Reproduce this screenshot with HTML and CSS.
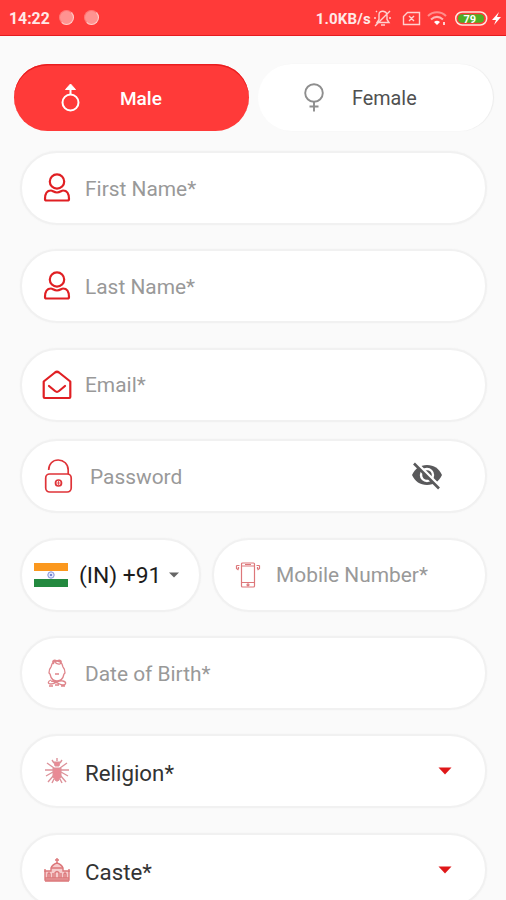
FILE: index.html
```html
<!DOCTYPE html>
<html lang="en">
<head>
<meta charset="utf-8">
<title>Register</title>
<link rel="stylesheet" href="styles.css">
</head>
<body>
<header class="status">
  <span class="clock">14:22</span>
  <i class="dot"></i><i class="dot"></i>
  <span class="speed">1.0KB/s</span>
  <svg class="status-icons" width="132" height="36" viewBox="0 0 132 36" fill="none" stroke="#ffd0cf" stroke-width="1.4">
    <path d="M3 22.500h12l-2-3v-4c0-5-8-6-8-1v5zM7 25h4M1 26 16 11M0 18h2M15 18h2M3 12l-1-1" />
    <path d="M33.500 12.500h12v12h-16v-8zM35 16l5 5m0-5-5 5" />
    <path d="M54 16c5-5 13-5 18 0" stroke="#ff8d8b" stroke-width="2"/>
    <path d="M57 19.500c4-3.500 8-3.500 12 0" stroke="#ffb5b3" stroke-width="2"/>
    <path d="M60 22c2-1.700 4-1.700 6 0l-3 3z" fill="#fff" stroke="none"/>
    <path d="M70 22v3" stroke-width="2"/>
    <rect x="81.700" y="12" width="31" height="13" rx="6.500" stroke="#ffe5dc" stroke-width="1.500"/>
    <rect x="84" y="14.300" width="26" height="8.500" rx="4" fill="#4fae25" stroke="none"/>
    <text class="battery" x="89.500" y="22.500">79</text>
    <path d="m125 12-7 8h4l-2 5 7-8h-4z" fill="#fff" stroke="none"/>
  </svg>
</header>
<main class="form">
  <div class="genders">
    <button class="gender gender-male">
      <svg class="gender-icon" width="22" height="32" viewBox="0 0 22 32" fill="none" stroke="#fff" stroke-width="2"><circle cx="11.500" cy="20.500" r="8"/><path d="M11.500 12.500V5"/><path d="m11.500 2 5 5.500h-10z" fill="#fff" stroke-width="1"/></svg>
      <span class="w-male">Male</span>
    </button>
    <button class="gender gender-female">
      <svg class="gender-icon" width="22" height="32" viewBox="0 0 22 32" fill="none" stroke="#8e8e8e" stroke-width="1.900"><circle cx="11" cy="11" r="8.800"/><path d="M11 20v9.500M6.500 24.500h9"/></svg>
      <span class="w-female">Female</span>
    </button>
  </div>

  <div class="field">
    <svg class="icon" width="30" height="32" viewBox="0 0 30 32" fill="none" stroke="#e01f23" stroke-width="2.200"><circle cx="15" cy="9.500" r="7.200"/><path d="M9 18.500c-4 0-6 3.500-6 8.500 0 1 .5 1.500 1.500 1.500h21c1 0 1.500-.5 1.500-1.500 0-5-2-8.500-6-8.500-1.500 0-3 2-6 2s-4.500-2-6-2z"/></svg>
    <span class="label">First Name*</span>
  </div>
  <div class="field">
    <svg class="icon" width="30" height="32" viewBox="0 0 30 32" fill="none" stroke="#e01f23" stroke-width="2.200"><circle cx="15" cy="9.500" r="7.200"/><path d="M9 18.500c-4 0-6 3.500-6 8.500 0 1 .5 1.500 1.500 1.500h21c1 0 1.500-.5 1.500-1.500 0-5-2-8.500-6-8.500-1.500 0-3 2-6 2s-4.500-2-6-2z"/></svg>
    <span class="label">Last Name*</span>
  </div>
  <div class="field">
    <svg class="icon" width="30" height="32" viewBox="0 0 30 32" fill="none" stroke="#e01f23" stroke-width="2.200" stroke-linejoin="round" stroke-linecap="round"><path d="M1.700 12.500 13 3.500q2-1.500 4 0l11.300 9V28q0 1-1 1H2.700q-1 0-1-1zM7 17l6 5q2 1.600 4 0l6-5"/></svg>
    <span class="label">Email*</span>
  </div>
  <div class="field field-password">
    <svg class="icon" width="30" height="36" viewBox="0 0 30 36" fill="none" stroke="#df3338" stroke-width="1.700"><rect x="1.700" y="16" width="25.500" height="18" rx="4"/><path d="M4.700 12c0-6 4-10 9.500-10s10 4 10 10v4"/><circle cx="14.500" cy="25" r="3"/><path d="M12.500 25h4M14.500 23v4" stroke-width=".8"/></svg>
    <span class="label">Password</span>
    <svg class="eye" width="32" height="30" viewBox="0 0 32 30"><path d="M1 14C4 7.500 9 4 16 4s12 3.500 15 10c-3 6.500-8 10-15 10S4 20.500 1 14z" fill="#59595b"/><circle cx="16" cy="14" r="6" fill="none" stroke="#fff" stroke-width="2.400"/><circle cx="16" cy="14" r="3.700" fill="#59595b"/><path d="M5 1.500 30 26.500" stroke="#fff" stroke-width="3"/><path d="M3 2.500 28 27.500" stroke="#59595b" stroke-width="2.600"/></svg>
  </div>
  <div class="phone-row">
    <div class="field country">
      <svg width="34" height="24" viewBox="0 0 34 24"><path fill="#fff" d="M0 0h34v24H0z"/><path fill="#fb981e" d="M0 0h34v8H0z"/><path fill="#23893f" d="M0 16h34v8H0z"/><circle cx="17" cy="12" r="3.200" fill="#dfe3fb" stroke="#8795d9"/><circle cx="17" cy="12" r="1" fill="#5266bb"/></svg>
      <span class="code">(IN) +91</span>
      <svg class="caret" width="10" height="6" viewBox="0 0 10 6"><path d="M0 .5h10L5 5.500z" fill="#666"/></svg>
    </div>
    <div class="field mobile">
      <svg width="26" height="28" viewBox="0 0 26 28" fill="none" stroke="#dd777a" stroke-width="1.200"><rect x="6.500" y="2" width="13" height="24" rx="1"/><path d="M6.500 5h13M6.500 21.500h13M10 3.500h6M1.500 4.500v3l2 1.500M4.500 4.500h-3M24.500 4.500v3l-2 1.500M21.500 4.500h3M3.500 6v2M22.500 6v2"/><circle cx="13" cy="23.800" r="1"/></svg>
      <span class="label">Mobile Number*</span>
    </div>
  </div>
  <div class="field">
    <svg class="icon" width="30" height="32" viewBox="0 0 30 32" fill="none" stroke="#df858b" stroke-width="1.300"><path d="M9 10c-2 2-2 4-2 6l1 1c1 5 4 7 7 7s6-2 7-7l1-1c0-2 0-4-2-6M9 10l1-3c2-4 8-4 10 0l1 3M12 7c-3-3 0-5 3-3 3-2 6 0 3 3M12 4q3 4 6 3M13 17h4M9 23c-3 1-4 4 0 4s8-4 12-3 3 4 0 4-8-4-12-4M7 29h4M13 28h4M19 29h4"/></svg>
    <span class="label">Date of Birth*</span>
  </div>
  <div class="field">
    <svg class="icon" width="30" height="32" viewBox="0 0 30 32" fill="none" stroke="#dd929a" stroke-width="1.400"><path d="M15 3v3M10 5l2 3M20 5l-2 3M5 8l7 5M25 8l-7 5M3 15h8M19 15h8M4 21l7-4M26 21l-7-4M6 27l6-7M24 27l-6-7M10 28l2-4M20 28l-2-4"/><path d="M12 7h6l-1 4h-4zM11 13h8v9l-3 4h-2l-3-4z" fill="#e98a95" stroke-width="1"/></svg>
    <span class="label dark">Religion*</span>
    <svg class="drop" width="14" height="8" viewBox="0 0 14 8"><path d="M.5.500h13L7 7.500z" fill="#df1719"/></svg>
  </div>
  <div class="field">
    <svg class="icon" width="30" height="32" viewBox="0 0 30 32" fill="none" stroke="#dc777a" stroke-width="1.400"><path d="M3 26V17h6v-3c1-3 3-4 6-5 3 1 5 2 6 5v3h6v9z" fill="#f6cccd"/><path d="M15 4v5M13 6h4M9 14h12M3 24h24M6 24v-4q1-2 2 0v4M11 24v-5M19 24v-5M13 24v-5q2-3 4 0v5M22 24v-4q1-2 2 0v4M3 27h24M3 18v-3M27 18v-3"/></svg>
    <span class="label dark">Caste*</span>
    <svg class="drop" width="14" height="8" viewBox="0 0 14 8"><path d="M.5.500h13L7 7.500z" fill="#df1719"/></svg>
  </div>
</main>
</body>
</html>
```
FILE: styles.css
```css
* { box-sizing: border-box; }
html, body { height: 100%; }
body {
  margin: 0;
  overflow: hidden;
  background: #fafafa;
  font-family: Roboto, "Liberation Sans", sans-serif;
}
svg { display: block; flex: none; }
.status {
  display: flex;
  align-items: center;
  height: 36px;
  padding-left: 9px;
  border-bottom: 1.500px solid #e51b1f;
  background: #ff3a39;
  color: #ffe9e8;
  font-weight: 700;
}
.clock { width: 50px; padding-top: 2px; font-size: 15.800px; }
.dot {
  width: 15px;
  height: 15px;
  margin-right: 10px;
  border-radius: 50%;
  background: #ff9391;
  border: 1px solid #ff7775;
  border-right-color: #ffd0cc;
  border-bottom-color: #ffd0cc;
}
.speed { margin-left: auto; padding-top: 3px; font-size: 15px; letter-spacing: .2px; white-space: nowrap; }
.status-icons { margin-left: 3px; }
.battery { font: 700 11px Roboto, sans-serif; fill: #fff; stroke: none; }
.form { padding: 28px 19px 0 20px; }
.genders { display: flex; gap: 9px; margin: 0 -6px 20px; }
.gender {
  display: flex;
  align-items: center;
  flex: 1;
  height: 67px;
  padding: 0 0 0 45px;
  border: 0;
  border-radius: 34px;
  font: 500 19px Roboto, sans-serif;
}
.gender-male { background: #ff3a39; color: #fff; box-shadow: inset 0 1.500px #e91e20; }
.gender-female { background: #fff; color: #505050; box-shadow: 1px 0 1px #ececec; font-weight: 400; font-size: 19.800px; }
.gender span { margin-left: 39px; padding-top: 1px; }
.gender .w-female { margin-left: 27px; }
.field {
  display: flex;
  align-items: center;
  height: 74px;
  margin-bottom: 24.400px;
  padding-left: 20px;
  border: 2px solid #f1f1f1;
  border-radius: 37px;
  background: #fff;
  box-shadow: 0 0 2px #f3f3f3;
}
.field:nth-child(4) { margin-bottom: 17.500px; }
.label { margin-left: 13px; padding-top: 1px; color: #999; font-size: 20.900px; white-space: nowrap; }
.dark { padding-top: 4px; color: #333; font-size: 22.300px; }
.field-password { padding-left: 22px; }
.field-password .label { margin-left: 16px; }
.eye { margin-left: auto; margin-right: 42px; }
.phone-row { display: flex; gap: 11px; }
.country { width: 181px; padding-left: 12px; }
.code { margin-left: 11px; padding-top: 2px; color: #1c1c1c; font-size: 22.800px; white-space: nowrap; }
.caret { margin-left: 8px; }
.mobile { flex: 1; padding-left: 21px; }
.mobile .label { margin-left: 15px; }
.drop { margin-left: auto; margin-right: 33px; }
```
